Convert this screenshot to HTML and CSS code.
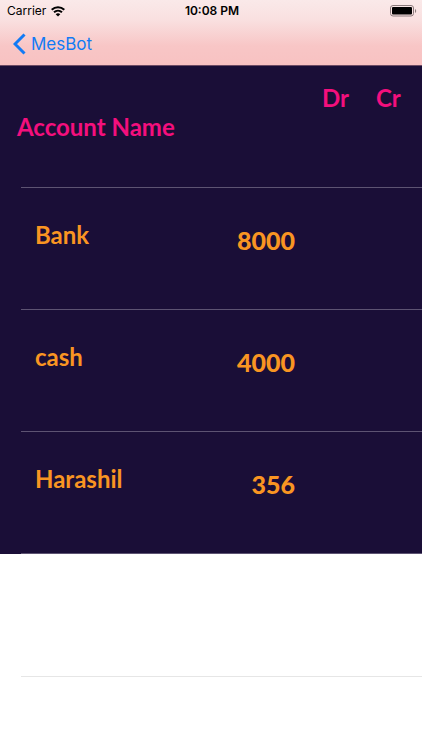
FILE: index.html
```html
<!DOCTYPE html>
<html lang="en">
<head>
<meta charset="utf-8">
<meta name="viewport" content="width=device-width, initial-scale=1">
<title>MesBot</title>
<link rel="stylesheet" href="styles.css">
</head>
<body>
<header class="top">
  <div class="status">
    <div class="carrier">
      <span>Carrier</span>
      <svg class="wifi" viewBox="0 0 14 11" aria-hidden="true">
        <path d="M.7 3.700C4.300.3 9.700.3 13.300 3.700M3 6.300c2.300-2.100 5.700-2.100 8 0" fill="none" stroke="#000" stroke-width="2"/>
        <path d="M4.700 8.200c1.300-1.200 3.300-1.200 4.600 0L7 10.500z"/>
      </svg>
    </div>
    <time class="clock">10:08 PM</time>
    <svg class="battery" viewBox="0 0 27 12" aria-hidden="true">
      <rect x=".5" y=".5" width="23" height="10.5" rx="2.5" fill="none" stroke="#8b7b7c"/>
      <rect x="2" y="2" width="20" height="7.5" rx="1"/>
      <path d="M25 4v4c1.600-.5 1.600-3.500 0-4z" fill="#8b7b7c"/>
    </svg>
  </div>
  <nav class="nav">
    <a class="back" href="#">
      <svg class="chevron" viewBox="0 0 13 22" aria-hidden="true"><path d="M11.500 1.500 2 11l9.500 9.500" fill="none" stroke="#127bf5" stroke-width="3"/></svg>
      <span>MesBot</span>
    </a>
  </nav>
</header>
<main>
  <table class="ledger">
    <thead>
      <tr><th class="account" scope="col">Account Name</th><th class="debit" scope="col">Dr</th><th class="credit" scope="col">Cr</th></tr>
    </thead>
    <tbody>
      <tr><td class="account">Bank</td><td class="debit">8000</td><td></td></tr>
      <tr><td class="account">cash</td><td class="debit">4000</td><td></td></tr>
      <tr><td class="account">Harashil</td><td class="debit">356</td><td></td></tr>
    </tbody>
  </table>
  <div class="blank"></div>
</main>
</body>
</html>
```
FILE: styles.css
```css
* { box-sizing: border-box; }
body {
  margin: 0;
  background: #fff;
  font-family: "Inter", sans-serif;
}
.top {
  background: linear-gradient(#fae9e9 0, #f9e0e0 20px, #f8c6c6 46px, #f8c2c2 100%);
  border-bottom: 1px solid #6d4b64;
}
.status {
  display: grid;
  grid-template-columns: 1fr auto 1fr;
  align-items: center;
  height: 22px;
  padding: 0 5px 0 7px;
  font-size: 12px;
  line-height: 22px;
}
.carrier { display: flex; align-items: center; gap: 5px; }
.wifi { width: 14px; height: 11px; }
.clock { font-weight: 600; }
.battery { width: 27px; height: 12px; justify-self: end; }
.nav { display: flex; align-items: center; height: 43px; padding-left: 13px; }
.back {
  display: flex;
  align-items: center;
  gap: 5px;
  color: #127bf5;
  font-size: 17px;
  line-height: 22px;
  text-decoration: none;
}
.chevron { width: 13px; height: 22px; }
.ledger {
  width: 100%;
  border-collapse: collapse;
  background: #1a0e37;
  color: #f99522;
  font: 700 24px/30px "Marker Felt", "Lato", sans-serif;
}
.ledger tr {
  height: 122px;
  background: linear-gradient(#5d5372, #5d5372) 21px 100% / 100% 1px no-repeat;
}
.ledger th, .ledger td { padding: 0; vertical-align: top; }
.ledger th { color: #f40f7d; font-weight: 700; }
.ledger .account { text-align: left; }
.ledger .debit { text-align: right; }
th.credit { width: 60px; text-align: left; }
.ledger th.account { padding: 46px 0 0 17px; }
.ledger th.debit { padding: 17px 13px 0 0; }
.ledger th.credit { padding: 17px 0 0 14px; }
.ledger td.account { padding: 32px 0 0 35px; }
.ledger td.debit { padding: 37px 67px 0 0; font-size: 25px; font-weight: 900; }
.blank {
  height: 123px;
  background: linear-gradient(#e6e6e6, #e6e6e6) 21px 100% / 100% 1px no-repeat;
}
```
